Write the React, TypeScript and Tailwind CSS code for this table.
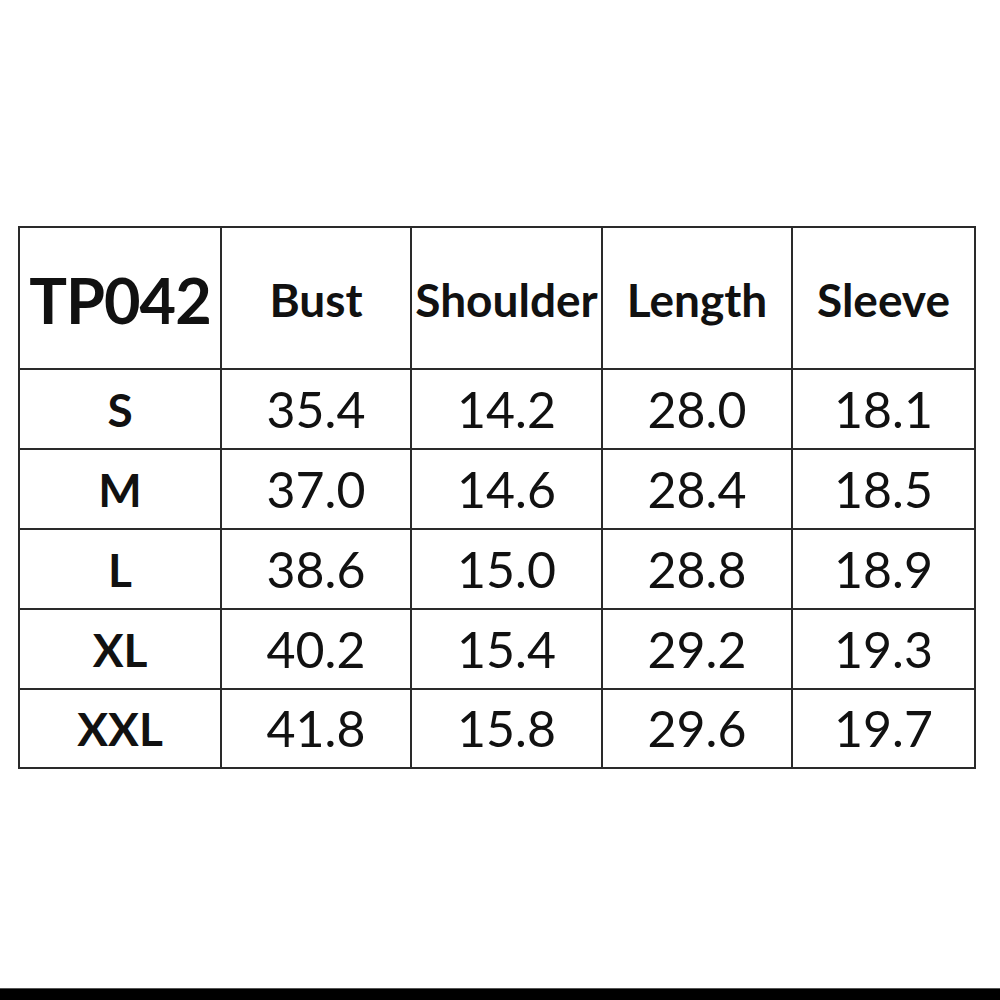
const headers = ["Bust", "Shoulder", "Length", "Sleeve"];

const rows: [string, string, string, string, string][] = [
  ["S", "35.4", "14.2", "28.0", "18.1"],
  ["M", "37.0", "14.6", "28.4", "18.5"],
  ["L", "38.6", "15.0", "28.8", "18.9"],
  ["XL", "40.2", "15.4", "29.2", "19.3"],
  ["XXL", "41.8", "15.8", "29.6", "19.7"],
];

const cell =
  "flex items-center justify-center border-r-2 border-b-2 border-[#2a2a2a] whitespace-nowrap overflow-visible";

export default function App() {
  return (
    <div
      className="relative h-[1000px] w-[1000px] bg-white text-[#111]"
      style={{ fontFamily: "Lato, 'Open Sans', sans-serif" }}
    >
      <div className="pl-[18px] pt-[226px]">
        <div className="grid w-[958px] grid-cols-[202px_190px_191px_190px_183px] grid-rows-[142px_80px_80px_80px_80px_79px] border-l-2 border-t-2 border-[#2a2a2a]">
          <div className={`${cell} text-[63px] font-bold tracking-[-1px] pt-[4px]`}>TP042</div>
          {headers.map((h) => (
            <div key={h} className={`${cell} text-[46px] font-bold pt-[2px]`}>
              {h}
            </div>
          ))}
          {rows.map((r) => (
            <>
              <div key={r[0]} className={`${cell} text-[46px] font-bold`}>
                {r[0]}
              </div>
              {r.slice(1).map((v, i) => (
                <div key={r[0] + i} className={`${cell} text-[50px]`}>
                  {v}
                </div>
              ))}
            </>
          ))}
        </div>
      </div>
      <div className="absolute bottom-0 left-0 h-[12px] w-full border-t border-[#555] bg-black" />
    </div>
  );
}
